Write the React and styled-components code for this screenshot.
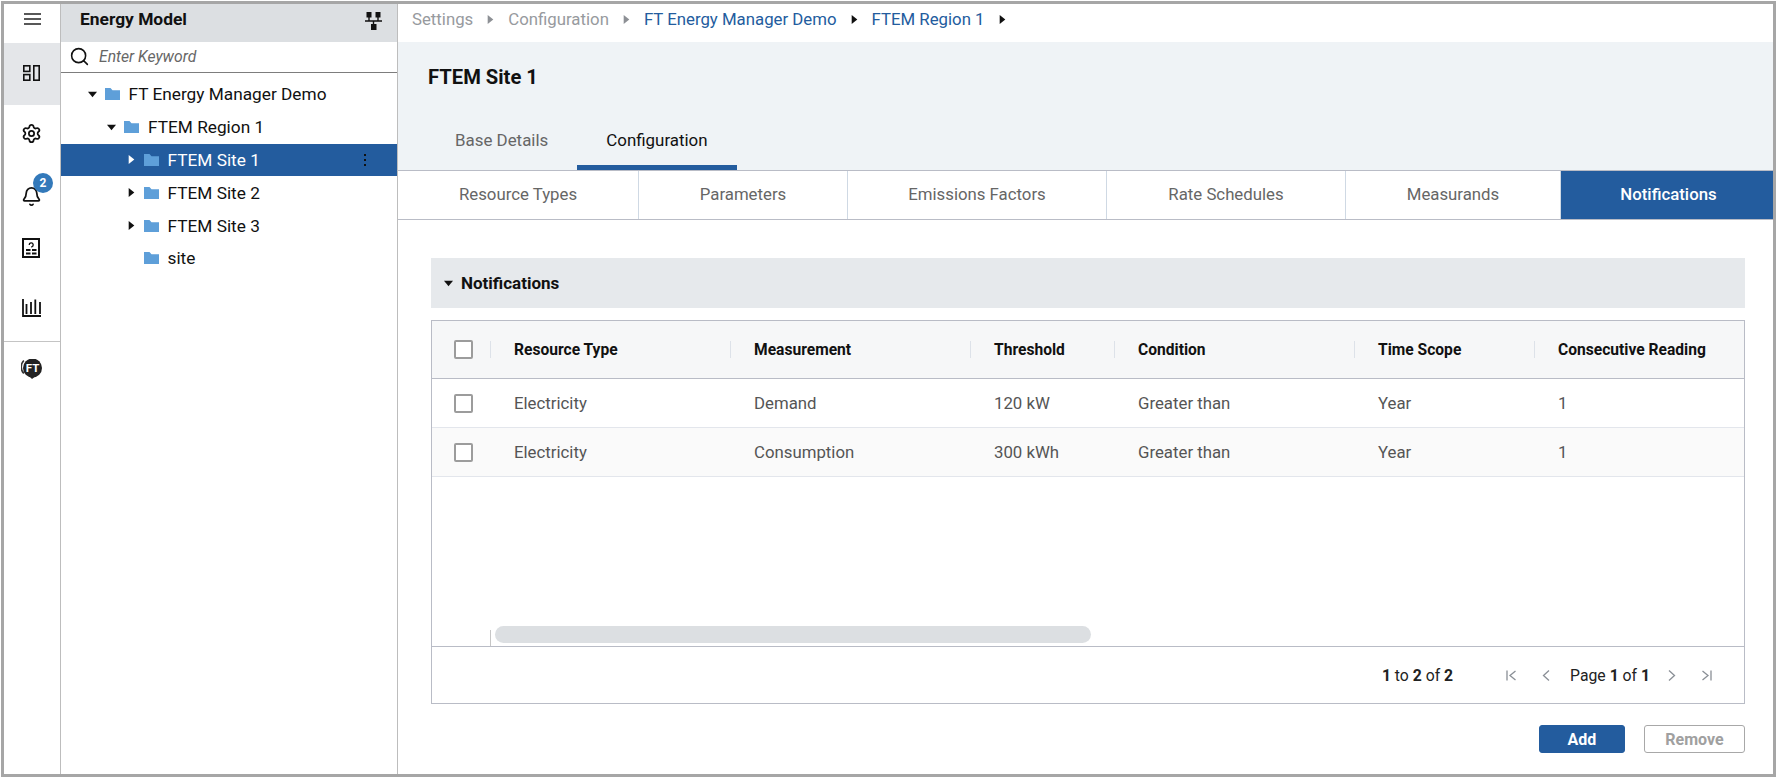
import React from 'react'
import styled, { createGlobalStyle } from 'styled-components'
import { Settings, Bell, Search } from 'lucide-react'

const blue = '#235c9e'
const line = '#b9bcc6'

const GlobalStyle = createGlobalStyle`
  html, body {
    margin: 0;
    padding: 0;
    background: #fff;
    font-family: Roboto, "Liberation Sans", sans-serif;
    color: #111;
  }
  * {
    box-sizing: border-box;
  }
`

const Frame = styled.div`
  width: 1775px;
  height: 776px;
  margin: 1px 0 0 1px;
  border: 3px solid #a6a6a6;
  display: flex;
  overflow: hidden;
`

const Rail = styled.nav`
  width: 57px;
  flex: none;
  display: flex;
  flex-direction: column;
  border-right: 1px solid #bdbdbd;
`

const RailTop = styled.div`
  height: 39px;
  display: flex;
  align-items: center;
  justify-content: center;
  padding-bottom: 9px;
`

const RailActive = styled.div`
  height: 62px;
  background: #e4e6e9;
  display: flex;
  align-items: center;
  justify-content: center;
  padding: 0 2px 3px 0;
`

const RailItem = styled.div`
  height: 24px;
  margin-top: ${({ $top }) => $top}px;
  padding-right: 2px;
  display: flex;
  align-items: center;
  justify-content: center;
  position: relative;
`

const RailLine = styled.div`
  height: 1px;
  margin-top: 21px;
  background: #c4c4c4;
`

const Badge = styled.span`
  position: absolute;
  left: 29px;
  top: -11px;
  width: 20px;
  height: 20px;
  border-radius: 50%;
  background: #3379ba;
  color: #fff;
  font-size: 12px;
  font-weight: 700;
  line-height: 20px;
  text-align: center;
`

const TreePanel = styled.aside`
  width: 337px;
  flex: none;
  display: flex;
  flex-direction: column;
  border-right: 1px solid #bdbdbd;
`

const PanelHead = styled.div`
  height: 38px;
  background: #dcdfe2;
  display: flex;
  align-items: center;
  justify-content: space-between;
  padding: 0 15px 9px 19px;
  font-size: 17.4px;
  font-weight: 700;
`

const NetworkIcon = styled.svg`
  width: 17px;
  height: 18px;
  margin-top: 5px;
`

const SearchRow = styled.div`
  height: 31px;
  display: flex;
  align-items: center;
  gap: 9px;
  padding: 0 0 2px 8px;
  border-bottom: 1px solid #7d7d7d;
  color: #666;
  font-size: 15.7px;
  font-style: italic;
`

const Tree = styled.ul`
  list-style: none;
  margin: 0;
  padding: 5px 0 0;
`

const TreeRow = styled.li`
  height: 32.8px;
  display: flex;
  align-items: center;
  padding-left: ${({ $level }) => 26.5 + $level * 19.5}px;
  padding-right: 30px;
  font-size: 17.25px;
  background: ${({ $selected }) => ($selected ? blue : 'transparent')};
  color: ${({ $selected }) => ($selected ? '#fff' : '#111')};
`

const CaretSlot = styled.span`
  width: 9px;
  height: 12px;
  flex: none;
  margin-right: 8px;
  display: flex;
  align-items: center;
  justify-content: center;
`

const FolderIcon = styled.svg`
  width: 15px;
  height: 12px;
  flex: none;
  margin-right: 9px;
`

const RowLabel = styled.span`
  flex: 1;
`

const Dots = styled.svg`
  width: 4px;
  height: 12px;
`

const Main = styled.main`
  flex: 1;
  min-width: 0;
  display: flex;
  flex-direction: column;
`

const Crumbs = styled.div`
  height: 38px;
  display: flex;
  align-items: center;
  gap: 13px;
  padding: 0 0 8px 14px;
  font-size: 16.8px;
`

const Crumb = styled.span`
  color: ${({ $on }) => ($on ? blue : '#979a9e')};
`

const TitleBand = styled.section`
  height: 129px;
  background: #eff3f6;
  border-bottom: 1px solid ${line};
  display: flex;
  flex-direction: column;
`

const Title = styled.h1`
  flex: 1;
  margin: 0;
  padding: 24px 0 0 30px;
  font-size: 20.2px;
  line-height: 22px;
  font-weight: 700;
  color: #111;
`

const Tabs = styled.div`
  display: flex;
  padding-left: 28px;
`

const Tab = styled.div`
  height: 55px;
  padding: 0 29px;
  display: flex;
  align-items: center;
  font-size: 16.9px;
  color: ${({ $on }) => ($on ? '#111' : '#666')};
  border-bottom: 5px solid ${({ $on }) => ($on ? blue : 'transparent')};
`

const SubTabs = styled.div`
  height: 49px;
  display: grid;
  grid-template-columns: 241px 209px 259px 239px 215px 1fr;
  border-bottom: 1px solid ${line};
`

const SubTab = styled.div`
  display: flex;
  align-items: center;
  justify-content: center;
  padding: 0 0 2px ${({ $on }) => ($on ? 3 : 0)}px;
  font-size: 16.8px;
  border-right: 1px solid #cfd9e4;
  background: ${({ $on }) => ($on ? blue : 'transparent')};
  color: ${({ $on }) => ($on ? '#fff' : '#666')};
  font-weight: ${({ $on }) => ($on ? 500 : 400)};

  &:last-child {
    border-right: none;
  }
`

const Content = styled.div`
  flex: 1;
  display: flex;
  flex-direction: column;
  padding: 38px 28px 0 33px;
`

const SectionBar = styled.div`
  height: 50px;
  background: #e6e9ec;
  display: flex;
  align-items: center;
  gap: 8px;
  padding-left: 13px;
  font-size: 17px;
  font-weight: 700;
`

const Table = styled.div`
  height: 384px;
  margin-top: 12px;
  border: 1px solid ${line};
  display: flex;
  flex-direction: column;
`

const columns = '58px 240px 240px 144px 240px 180px 1fr'

const HeadRow = styled.div`
  height: 58px;
  display: grid;
  grid-template-columns: ${columns};
  align-items: center;
  background: #f6f7f8;
  border-bottom: 1px solid ${line};
  font-size: 15.6px;
  font-weight: 700;
`

const BodyRow = styled.div`
  height: 49px;
  display: grid;
  grid-template-columns: ${columns};
  align-items: center;
  background: ${({ $alt }) => ($alt ? '#fafafa' : '#fff')};
  border-bottom: 1px solid #e3e6ec;
  font-size: 16.8px;
  color: #555;
`

const HeadCell = styled.div`
  height: 17px;
  line-height: 19px;
  padding-left: 23px;
  border-left: 1px solid #dde2e9;
  white-space: nowrap;
`

const Cell = styled.div`
  padding-left: 24px;
  white-space: nowrap;
`

const BoxCell = styled.div`
  padding-left: 22px;
`

const Check = styled.span`
  display: block;
  width: 19px;
  height: 19px;
  background: #fff;
  border: 2px solid #9c9c9c;
  border-radius: 2px;
`

const ScrollArea = styled.div`
  flex: 1;
  display: flex;
  align-items: flex-end;
  padding-left: 58px;
`

const ScrollThumb = styled.div`
  width: 596px;
  height: 17px;
  margin: 0 0 3px 4px;
  border-radius: 9px;
  background: #dcdfe2;
`

const ScrollTick = styled.div`
  width: 1px;
  height: 16px;
  background: #c6c6c6;
`

const Footer = styled.div`
  height: 57px;
  border-top: 1px solid ${line};
  display: flex;
  align-items: center;
  justify-content: flex-end;
  padding: 0 32px 0 0;
  font-size: 15.75px;
  color: #222;

  b {
    font-weight: 700;
  }
`

const Count = styled.span`
  margin-right: 53px;
`

const Pager = styled.div`
  display: flex;
  align-items: center;
  gap: 24px;
`

const PageText = styled.span`
  margin: 0 -8px 0 -6px;
`

const PagerIcon = styled.svg`
  width: 11px;
  height: 11px;
  fill: none;
  stroke: #8a8f96;
  stroke-width: 1.3;
`

const Actions = styled.div`
  display: flex;
  justify-content: flex-end;
  gap: 19px;
  margin-top: 21px;
`

const Button = styled.button`
  width: ${({ $primary }) => ($primary ? 86 : 101)}px;
  height: 28px;
  padding: 0;
  font-family: inherit;
  font-size: 16px;
  font-weight: 700;
  border-radius: 3px;
  border: 1px solid ${({ $primary }) => ($primary ? blue : '#a8a8a8')};
  background: ${({ $primary }) => ($primary ? blue : '#fff')};
  color: ${({ $primary }) => ($primary ? '#fff' : '#a0a0a0')};
`

function Caret({ dir = 'right', color = '#111', size = 9 }) {
  const points = dir === 'down' ? '0,1.5 8,1.5 4,6.5' : '1.5,0 6.5,4 1.5,8'
  return (
    <svg width={size} height={size} viewBox='0 0 8 8'>
      <polygon points={points} fill={color} />
    </svg>
  )
}

function Folder() {
  return (
    <FolderIcon viewBox='0 0 15 12'>
      <path d='M0 0h5.5l2 2.2H15V12H0z' fill='#5e9fd9' />
    </FolderIcon>
  )
}

const treeData = [
  { label: 'FT Energy Manager Demo', level: 0, caret: 'down' },
  { label: 'FTEM Region 1', level: 1, caret: 'down' },
  { label: 'FTEM Site 1', level: 2, caret: 'right', selected: true },
  { label: 'FTEM Site 2', level: 2, caret: 'right' },
  { label: 'FTEM Site 3', level: 2, caret: 'right' },
  { label: 'site', level: 2 },
]

const subTabs = ['Resource Types', 'Parameters', 'Emissions Factors', 'Rate Schedules', 'Measurands', 'Notifications']
const headers = ['Resource Type', 'Measurement', 'Threshold', 'Condition', 'Time Scope', 'Consecutive Reading']
const rows = [
  ['Electricity', 'Demand', '120 kW', 'Greater than', 'Year', '1'],
  ['Electricity', 'Consumption', '300 kWh', 'Greater than', 'Year', '1'],
]

export default function App() {
  return (
    <>
      <GlobalStyle />
      <Frame>
        <Rail>
          <RailTop>
            <svg width='17' height='12' viewBox='0 0 17 12'>
              <path d='M0 1h17M0 6h17M0 11h17' stroke='#222' strokeWidth='1.3' />
            </svg>
          </RailTop>
          <RailActive>
            <svg width='17' height='16' viewBox='0 0 17 16' fill='none' stroke='#111' strokeWidth='1.6'>
              <rect x='.8' y='.8' width='6' height='5.6' />
              <rect x='.8' y='9.6' width='6' height='5.6' />
              <rect x='10.8' y='.8' width='5.4' height='14.4' />
            </svg>
          </RailActive>
          <RailItem $top={16}>
            <Settings size={21} strokeWidth={2} color='#111' />
          </RailItem>
          <RailItem $top={39}>
            <Bell size={21} strokeWidth={2} color='#111' />
            <Badge>2</Badge>
          </RailItem>
          <RailItem $top={28}>
            <svg width='18' height='20' viewBox='0 0 18 20' fill='none' stroke='#111'>
              <rect x='1' y='1' width='16' height='18' strokeWidth='2' />
              <path d='M7.2 7a2 2 0 1 1 2.6 1.8V9.6' strokeWidth='1.3' />
              <path d='M4 12h4.5M10 12h4.5M4 15.4h4.5M10 15.4h4.5' strokeWidth='2' />
            </svg>
          </RailItem>
          <RailItem $top={36}>
            <svg width='19' height='18' viewBox='0 0 19 18' fill='none' stroke='#111'>
              <path d='M1 0v17h18' strokeWidth='1.8' />
              <path d='M4.5 15V5M9 15V3M13.3 15V.5M18 15V3' strokeWidth='1.8' />
            </svg>
          </RailItem>
          <RailLine />
          <RailItem $top={15}>
            <svg width='21' height='20' viewBox='0 0 21 20'>
              <path d='M2.8 1.5a9.5 9.5 0 0 0 0 13' fill='none' stroke='#333' strokeWidth='1.6' />
              <circle cx='11.5' cy='9' r='9.5' fill='#222' />
              <polygon points='7,16 16,16 11,20' fill='#222' />
              <text x='11.5' y='13' textAnchor='middle' fontSize='11.5' fontWeight='700' fontFamily='Roboto' fill='#fff'>FT</text>
            </svg>
          </RailItem>
        </Rail>

        <TreePanel>
          <PanelHead>
            <span>Energy Model</span>
            <NetworkIcon viewBox='0 0 17 18'>
              <path d='M1.5 0h5v5.5h-5zM10.5 0h5v5.5h-5zM6 12h5.5v6H6z' fill='#111' />
              <path d='M4 5v4M13 5v4M0 9h17M8.5 9v3' stroke='#111' strokeWidth='1.4' fill='none' />
            </NetworkIcon>
          </PanelHead>
          <SearchRow>
            <Search size={21} strokeWidth={1.8} color='#111' />
            <span>Enter Keyword</span>
          </SearchRow>
          <Tree>
            {treeData.map(item => (
              <TreeRow key={item.label} $level={item.level} $selected={item.selected}>
                <CaretSlot>
                  {item.caret && <Caret dir={item.caret} color={item.selected ? '#fff' : '#111'} />}
                </CaretSlot>
                <Folder />
                <RowLabel>{item.label}</RowLabel>
                {item.selected && (
                  <Dots viewBox='0 0 4 12'>
                    <path d='M1 0h2v2H1zM1 5h2v2H1zM1 10h2v2H1z' fill='#111' />
                  </Dots>
                )}
              </TreeRow>
            ))}
          </Tree>
        </TreePanel>

        <Main>
          <Crumbs>
            <Crumb>Settings</Crumb>
            <Caret color='#8d9095' />
            <Crumb>Configuration</Crumb>
            <Caret color='#8d9095' />
            <Crumb $on>FT Energy Manager Demo</Crumb>
            <Caret />
            <Crumb $on>FTEM Region 1</Crumb>
            <Caret />
          </Crumbs>
          <TitleBand>
            <Title>FTEM Site 1</Title>
            <Tabs>
              <Tab>Base Details</Tab>
              <Tab $on>Configuration</Tab>
            </Tabs>
          </TitleBand>
          <SubTabs>
            {subTabs.map(label => (
              <SubTab key={label} $on={label === 'Notifications'}>{label}</SubTab>
            ))}
          </SubTabs>
          <Content>
            <SectionBar>
              <Caret dir='down' />
              Notifications
            </SectionBar>
            <Table>
              <HeadRow>
                <BoxCell><Check /></BoxCell>
                {headers.map(h => <HeadCell key={h}>{h}</HeadCell>)}
              </HeadRow>
              {rows.map((row, i) => (
                <BodyRow key={row[1]} $alt={i === 1}>
                  <BoxCell><Check /></BoxCell>
                  {row.map((value, j) => <Cell key={j}>{value}</Cell>)}
                </BodyRow>
              ))}
              <ScrollArea>
                <ScrollTick />
                <ScrollThumb />
              </ScrollArea>
              <Footer>
                <Count><b>1</b> to <b>2</b> of <b>2</b></Count>
                <Pager>
                  <PagerIcon viewBox='0 0 11 11'><path d='M1 .5v10M9.5 1 4 5.5l5.5 4.5' /></PagerIcon>
                  <PagerIcon viewBox='0 0 11 11'><path d='M8 .5 2.5 5.5 8 10.5' /></PagerIcon>
                  <PageText>Page <b>1</b> of <b>1</b></PageText>
                  <PagerIcon viewBox='0 0 11 11'><path d='M3 .5 8.5 5.5 3 10.5' /></PagerIcon>
                  <PagerIcon viewBox='0 0 11 11'><path d='M10 .5v10M1.5 1 7 5.5 1.5 10' /></PagerIcon>
                </Pager>
              </Footer>
            </Table>
            <Actions>
              <Button $primary>Add</Button>
              <Button>Remove</Button>
            </Actions>
          </Content>
        </Main>
      </Frame>
    </>
  )
}
